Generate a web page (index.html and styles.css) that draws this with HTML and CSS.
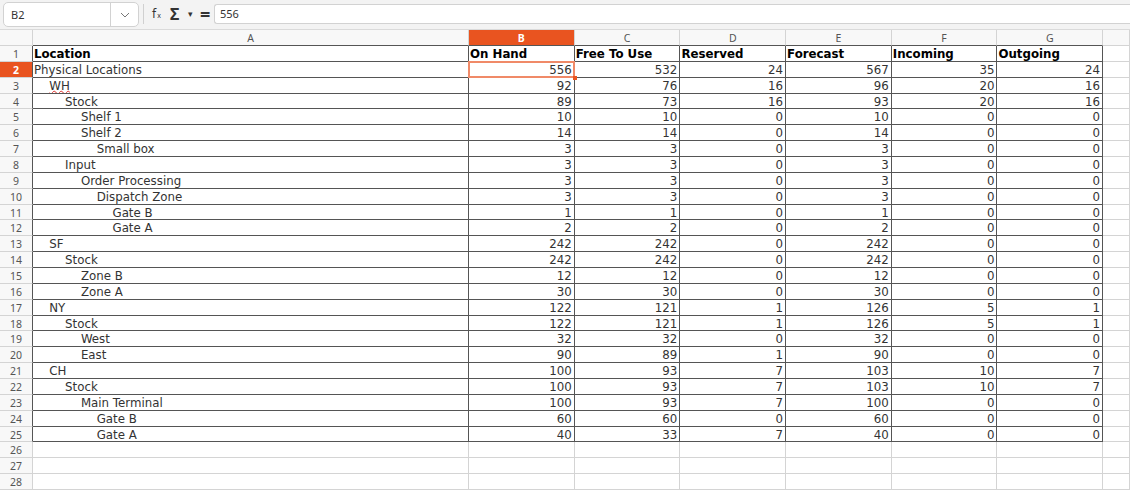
FILE: index.html
```html
<!DOCTYPE html>
<html lang="en">
<head>
    <meta charset="UTF-8">
    <title>Stock by Location</title>
    <link rel="stylesheet" href="styles.css">
</head>
<body>
    <div class="toolbar">
        <div class="namebox">
            <span class="name">B2</span>
            <span class="drop">
                <svg width="10" height="6" viewBox="0 0 10 6"><polyline points="1,1 5,5 9,1" fill="none" stroke="#777" stroke-width="1"/></svg>
            </span>
        </div>
        <div class="sep"></div>
        <div class="fbtns">
            <span class="fx">f<small>x</small></span>
            <span class="sigma">&Sigma;</span>
            <span class="caret">&#9662;</span>
            <span class="eq">=</span>
        </div>
        <div class="formula">556</div>
    </div>

    <div class="sheet" id="sheet"></div>

    <script>
        const cols = ['A', 'B', 'C', 'D', 'E', 'F', 'G', ''];
        const head = ['Location', 'On Hand', 'Free To Use', 'Reserved', 'Forecast', 'Incoming', 'Outgoing'];
        // name, indent level, values
        const rows = [
            ['Physical Locations', 0, 556, 532, 24, 567, 35, 24],
            ['WH', 1, 92, 76, 16, 96, 20, 16],
            ['Stock', 2, 89, 73, 16, 93, 20, 16],
            ['Shelf 1', 3, 10, 10, 0, 10, 0, 0],
            ['Shelf 2', 3, 14, 14, 0, 14, 0, 0],
            ['Small box', 4, 3, 3, 0, 3, 0, 0],
            ['Input', 2, 3, 3, 0, 3, 0, 0],
            ['Order Processing', 3, 3, 3, 0, 3, 0, 0],
            ['Dispatch Zone', 4, 3, 3, 0, 3, 0, 0],
            ['Gate B', 5, 1, 1, 0, 1, 0, 0],
            ['Gate A', 5, 2, 2, 0, 2, 0, 0],
            ['SF', 1, 242, 242, 0, 242, 0, 0],
            ['Stock', 2, 242, 242, 0, 242, 0, 0],
            ['Zone B', 3, 12, 12, 0, 12, 0, 0],
            ['Zone A', 3, 30, 30, 0, 30, 0, 0],
            ['NY', 1, 122, 121, 1, 126, 5, 1],
            ['Stock', 2, 122, 121, 1, 126, 5, 1],
            ['West', 3, 32, 32, 0, 32, 0, 0],
            ['East', 3, 90, 89, 1, 90, 0, 0],
            ['CH', 1, 100, 93, 7, 103, 10, 7],
            ['Stock', 2, 100, 93, 7, 103, 10, 7],
            ['Main Terminal', 3, 100, 93, 7, 100, 0, 0],
            ['Gate B', 4, 60, 60, 0, 60, 0, 0],
            ['Gate A', 4, 40, 33, 7, 40, 0, 0]
        ];

        const sheet = document.getElementById('sheet');

        function cell(cls, text) {
            const el = document.createElement('div');
            el.className = 'cell ' + cls;
            if (text !== undefined) el.textContent = text;
            sheet.appendChild(el);
            return el;
        }

        // column headers
        cell('corner');
        cols.forEach((c, i) => {
            let cls = 'colhead';
            if (i < 7) cls += ' edge';
            if (c === 'B') cls += ' active';
            cell(cls, c);
        });

        for (let r = 1; r <= 28; r++) {
            const inData = r <= 25;
            let rh = 'rowhead';
            if (inData) rh += ' edge';
            if (r === 2) rh += ' active';
            cell(rh, r);

            for (let c = 0; c < 8; c++) {
                let cls = inData && c < 7 ? 'd' : 'e';
                let text = '';
                if (r === 1 && c < 7) {
                    cls += ' bold';
                    text = head[c];
                } else if (inData && c < 7) {
                    const row = rows[r - 2];
                    if (c === 0) {
                        cls += ' lvl' + row[1];
                        text = row[0];
                    } else {
                        cls += ' num';
                        text = row[c + 1];
                    }
                }
                const el = cell(cls, text);
                if (r === 3 && c === 0) {
                    el.innerHTML = '<span class="spell">WH</span>';
                }
                if (r === 2 && c === 1) el.classList.add('sel');
            }
        }
    </script>
</body>
</html>
```

FILE: styles.css
```css
body {
    margin: 0;
    background-color: #fff;
    font-family: "DejaVu Sans", sans-serif;
    color: #333;
    overflow: hidden;
}

.toolbar {
    height: 29px;
    display: flex;
    align-items: flex-start;
    background-color: #f3f3f3;
    border-bottom: 1px solid #dadada;
    font-family: "Noto Sans", sans-serif;
    font-size: 11px;
    color: #333;
}

.namebox {
    margin: 2px 0 0 3px;
    width: 136px;
    height: 25px;
    box-sizing: border-box;
    display: flex;
    background-color: #fff;
    border: 1px solid #d2d2d2;
    border-radius: 5px;
}

.namebox .name {
    flex: 1;
    padding-left: 7px;
    line-height: 23px;
}

.namebox .drop {
    width: 27px;
    border-left: 1px solid #d2d2d2;
    display: flex;
    align-items: center;
    justify-content: center;
}

.sep {
    width: 1px;
    height: 20px;
    margin: 4px 7px 0 4px;
    background-color: #d0d0d0;
}

.fbtns {
    display: flex;
    align-items: center;
    height: 27px;
    color: #333;
}

.fx {
    font-size: 12px;
    width: 18px;
    padding-left: 1px;
}

.fx small {
    font-size: 7px;
    margin-left: 1px;
}

.sigma {
    font-size: 16px;
    font-weight: bold;
    width: 18px;
}

.caret {
    font-size: 9px;
    width: 12px;
}

.eq {
    font-size: 18px;
    font-weight: bold;
    width: 14px;
}

.formula {
    flex: 1;
    margin-top: 4px;
    height: 20px;
    box-sizing: border-box;
    padding-left: 5px;
    line-height: 18px;
    background-color: #fff;
    border: 1px solid #d2d2d2;
    border-right: none;
    border-radius: 3px 0 0 3px;
}

.sheet {
    display: grid;
    grid-template-columns: 33px 436px repeat(6, 105.7px) 1fr;
    grid-template-rows: 16px repeat(28, 15.87px);
    font-size: 11.8px;
}

.cell {
    box-sizing: border-box;
    border-right: 1px solid #d4d4d4;
    border-bottom: 1px solid #d4d4d4;
    white-space: nowrap;
    overflow: hidden;
    line-height: 15px;
    padding-top: 1px;
}

.corner,
.colhead,
.rowhead {
    background-color: #f8f8f8;
    font-family: "Noto Sans", sans-serif;
    font-size: 10.5px;
    color: #555;
    text-align: center;
}

.colhead {
    line-height: 15px;
}

.colhead.edge {
    border-bottom-color: #555;
}

.rowhead.edge {
    border-right-color: #555;
}

.colhead.active,
.rowhead.active {
    background-color: #e95420;
    color: #fff;
    font-weight: bold;
}

.d {
    border-right-color: #555;
    border-bottom-color: #555;
    padding-left: 1px;
}

.bold {
    font-weight: bold;
    color: #000;
}

.num {
    text-align: right;
    padding-right: 2px;
}

.lvl1 { padding-left: 16.3px; }
.lvl2 { padding-left: 32.1px; }
.lvl3 { padding-left: 47.9px; }
.lvl4 { padding-left: 63.7px; }
.lvl5 { padding-left: 79.5px; }

.spell {
    text-decoration: underline wavy #e0312b;
    text-decoration-thickness: 1px;
    text-underline-offset: 0;
    text-decoration-skip-ink: none;
}

.sel {
    position: relative;
    overflow: visible;
}

.sel::before {
    content: "";
    position: absolute;
    left: -1px;
    top: -1px;
    right: -1px;
    bottom: -1px;
    border: 2px solid #f08a68;
}

.sel::after {
    content: "";
    position: absolute;
    right: -3px;
    bottom: -3px;
    width: 4px;
    height: 4px;
    background-color: #e95420;
}
```
